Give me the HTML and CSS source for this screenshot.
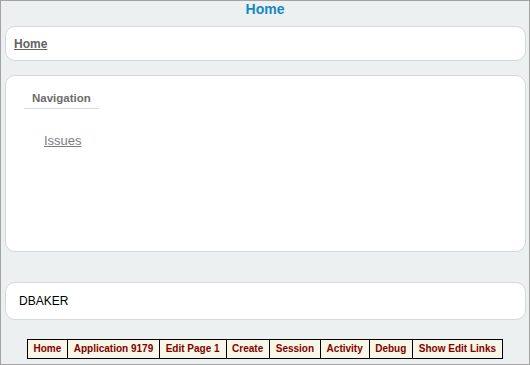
FILE: index.html
```html
<!DOCTYPE html>
<html lang="en">
<head>
    <meta charset="UTF-8">
    <title>Home</title>
    <link rel="stylesheet" href="styles.css">
</head>
<body>
    <div class="page-title">Home</div>

    <div class="region breadcrumb">
        <a href="#">Home</a>
    </div>

    <div class="region nav">
        <div class="nav-title">Navigation</div>
        <ul class="nav-list">
            <li><a href="#">Issues</a></li>
        </ul>
    </div>

    <div class="region user">DBAKER</div>

    <div class="dev-bar">
        <div class="dev-links">
            <a href="#">Home</a>
            <a href="#">Application 9179</a>
            <a href="#">Edit Page 1</a>
            <a href="#">Create</a>
            <a href="#">Session</a>
            <a href="#">Activity</a>
            <a href="#">Debug</a>
            <a href="#">Show Edit Links</a>
        </div>
    </div>
</body>
</html>
```

FILE: styles.css
```css
html, body {
    height: 100%;
}

body {
    margin: 0;
    box-sizing: border-box;
    border: 1px solid #a3a3a3;
    background-color: #edf0f1;
    font-family: "Liberation Sans", Arial, sans-serif;
}

.page-title {
    text-align: center;
    font-size: 14px;
    font-weight: bold;
    line-height: 17px;
    color: #1589c3;
}

.region {
    background-color: #fff;
    border: 1px solid #d5d9db;
    border-radius: 10px;
    margin: 0 3px 0 4px;
}

.breadcrumb {
    margin-top: 8px;
    padding: 8px;
    line-height: 15px;
}

.breadcrumb a {
    font-size: 12px;
    font-weight: bold;
    color: #626262;
}

.nav {
    margin-top: 14px;
    height: 177px;
    box-sizing: border-box;
}

.nav-title {
    width: fit-content;
    margin: 14px 0 0 18px;
    padding: 0 8px 2px 8px;
    border-bottom: 1px solid #dcdcdc;
    font-size: 11.5px;
    font-weight: bold;
    line-height: 16px;
    color: #6c6c6c;
}

.nav-list {
    list-style: none;
    margin: 24px 0 0 38px;
    padding: 0;
}

.nav-list li {
    font-size: 13px;
    line-height: 16px;
}

.nav-list a {
    color: #7c7c86;
}

.user {
    margin-top: 30px;
    padding: 10px 13px;
    font-size: 12px;
    line-height: 16px;
    color: #000;
}

.dev-bar {
    display: flex;
    justify-content: center;
    margin-top: 19px;
}

.dev-links {
    display: flex;
    border: 1px solid #000;
    background-color: #f8f6e6;
}

.dev-links a {
    padding: 0 6px 0 5.5px;
    border-left: 1px solid #000;
    font-size: 10px;
    font-weight: bold;
    line-height: 18px;
    color: #800000;
    text-decoration: none;
}

.dev-links a:first-child {
    border-left: none;
}
```
